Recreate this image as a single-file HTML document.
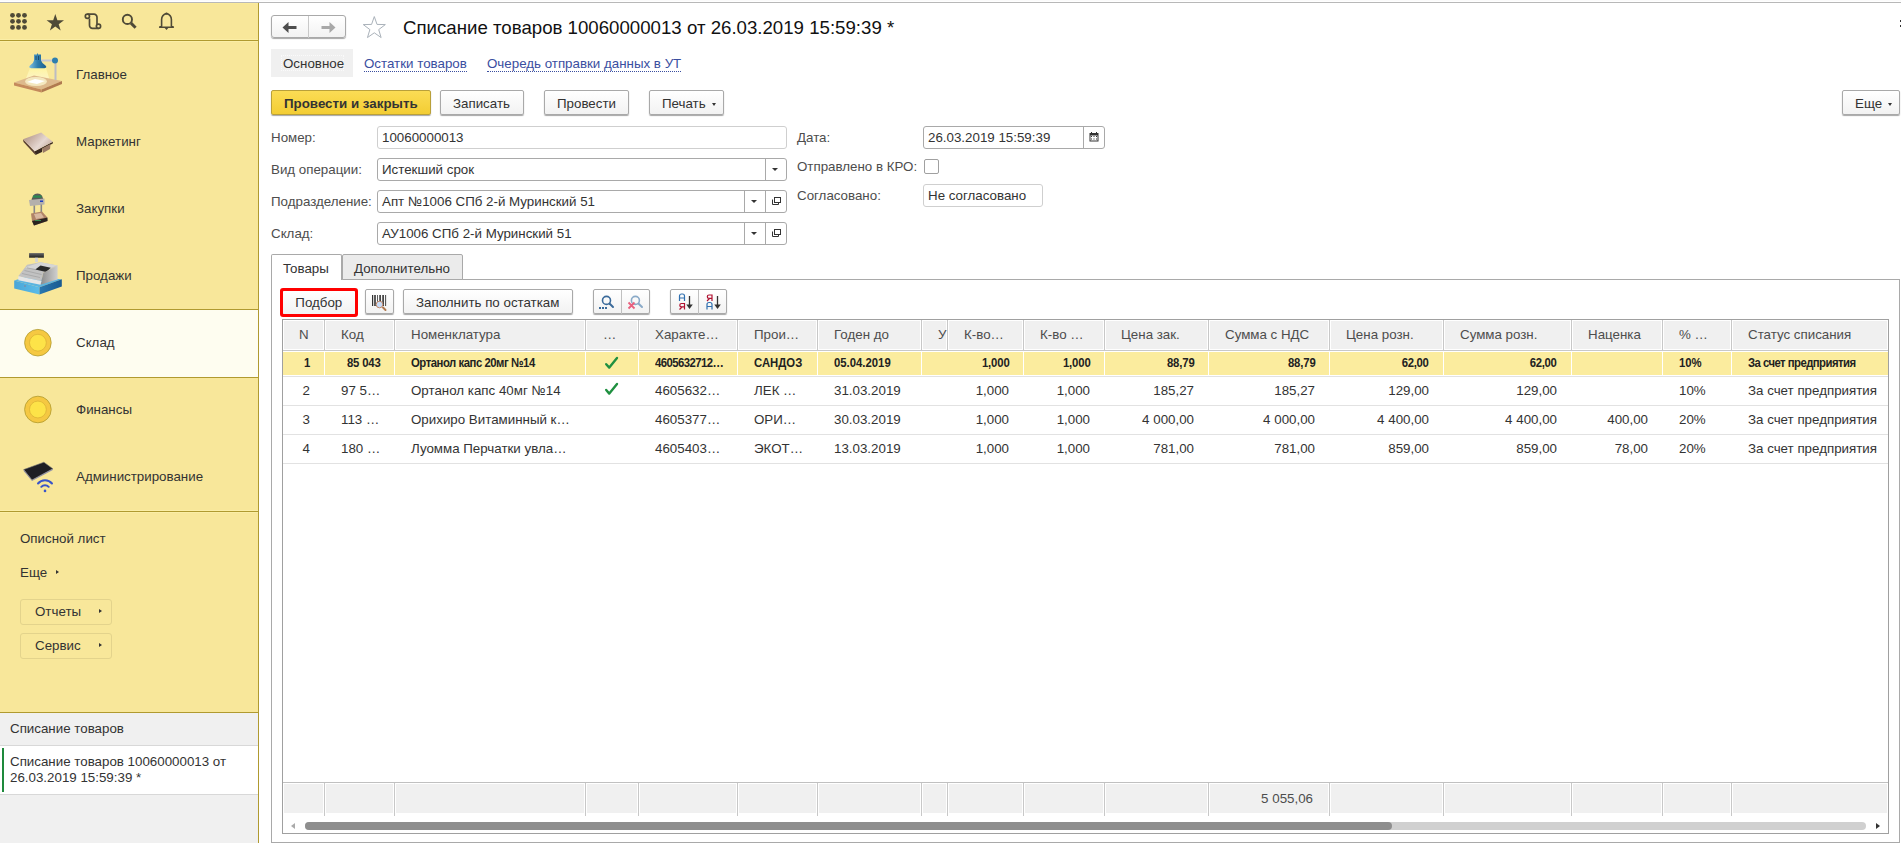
<!DOCTYPE html>
<html><head><meta charset="utf-8">
<style>
*{box-sizing:border-box;margin:0;padding:0}
html,body{width:1901px;height:843px;overflow:hidden;background:#fff}
body{font-family:"Liberation Sans",sans-serif;font-size:13.33px;color:#333;position:relative}
.a{position:absolute;white-space:nowrap}
.t{position:absolute;white-space:nowrap;line-height:15px}
/* sidebar */
#sb{position:absolute;left:0;top:3px;width:258px;height:840px;background:#f8e79a}
#sbr{position:absolute;left:258px;top:3px;width:1px;height:840px;background:#b09a30}
.hl{position:absolute;left:0;width:258px;height:1px;background:#b09a30}
.sec{position:absolute;left:76px;font-size:13.33px;color:#333}
/* buttons */
.btn{position:absolute;border:1px solid #a9a9a9;border-radius:2px;background:linear-gradient(#fff,#f2f2f2);box-shadow:0 1px 1px rgba(0,0,0,.35)}
.inp{position:absolute;border:1px solid #a9a9a9;border-radius:3px;background:#fff}
.lbl{position:absolute;white-space:nowrap;color:#4d4d4d}
.dd{position:absolute;width:0;height:0;border-left:4px solid transparent;border-right:4px solid transparent;border-top:4px solid #333}
.link{position:absolute;white-space:nowrap;color:#3a4ea0;border-bottom:1px dotted #3a4ea0}
/* grid */
.hc{position:absolute;top:320px;height:30px;background:#f0f0f0;border:1px solid #fff}
.vs{position:absolute;width:1px;background:#c8c8c8}
.rs{position:absolute;left:283px;width:1605px;height:1px;background:#e2e2e2}
.c{position:absolute;white-space:nowrap}
.b{font-weight:bold;transform:scaleX(.81);transform-origin:0 0;color:#222}
.br{font-weight:bold;transform:scaleX(.81);transform-origin:100% 0;color:#222}
</style></head><body>

<!-- top gray line -->
<div class="a" style="left:0;top:0;width:1901px;height:1px;background:#fbfbfb"></div>
<div class="a" style="left:0;top:2px;width:1901px;height:1px;background:#b8b8b8"></div>

<!-- SIDEBAR -->
<div id="sb"></div>
<div id="sbr"></div>
<div class="a" style="left:0;top:3px;width:258px;height:1px;background:#fbeb9a"></div>
<!-- toolbar line -->
<div class="a" style="left:0;top:39px;width:258px;height:1px;background:#fbeea6"></div><div class="hl" style="top:40px"></div><div class="a" style="left:0;top:41px;width:258px;height:1px;background:#fbeea6"></div>

<!-- toolbar icons -->
<svg class="a" style="left:0;top:0" width="258" height="40">
  <g fill="#4f4a37">
    <circle cx="12.5" cy="15.3" r="2.4"/><circle cx="18.5" cy="15.3" r="2.4"/><circle cx="24.5" cy="15.3" r="2.4"/>
    <circle cx="12.5" cy="21.3" r="2.4"/><circle cx="18.5" cy="21.3" r="2.4"/><circle cx="24.5" cy="21.3" r="2.4"/>
    <circle cx="12.5" cy="27.4" r="2.4"/><circle cx="18.5" cy="27.4" r="2.4"/><circle cx="24.5" cy="27.4" r="2.4"/>
    <path d="M55.3 14 L57.4 20.3 L64 20.3 L58.7 24.2 L60.7 30.5 L55.3 26.6 L49.9 30.5 L51.9 24.2 L46.6 20.3 L53.2 20.3 Z"/>
  </g>
  <g fill="none" stroke="#4f4a37" stroke-width="1.7">
    <circle cx="87.4" cy="16.3" r="2.1"/><circle cx="98.5" cy="26.3" r="2.1"/><path d="M87.4 14.2 H94 A3 3 0 0 1 97 17.2 V24.2 M89.5 18.4 V25 A3 3 0 0 0 92.5 28.3 H98.5"/>
    <circle cx="127.4" cy="19.4" r="4.6" stroke-width="1.9"/>
    <path d="M131 23.1 L135.6 27.7" stroke-width="2.9"/>
    <path d="M161.6 26 V19.5 Q161.6 15 166.5 13.2 Q171.4 15 171.4 19.5 V26 Q173.3 26.4 173.3 27.3 H159.7 Q159.7 26.4 161.6 26 Z" stroke-width="1.6" stroke-linejoin="round"/>
  </g>
  <path d="M166.5 13 l1.6 1.8 h-3.2z M166.5 30 l1.8 -2 h-3.6z" fill="#4f4a37"/>
</svg>

<!-- section icons & labels -->
<svg class="a" style="left:0;top:41px" width="258" height="470">
  <!-- Главное lamp -->
  <defs>
    <linearGradient id="light" x1="0" y1="0" x2="0" y2="1"><stop offset="0" stop-color="#fff6a0" stop-opacity=".9"/><stop offset="1" stop-color="#fffbe0" stop-opacity=".6"/></linearGradient>
    <linearGradient id="shade" x1="0" y1="0" x2="1" y2="0"><stop offset="0" stop-color="#7fc0e0"/><stop offset=".5" stop-color="#2f7fae"/><stop offset="1" stop-color="#1e5f8e"/></linearGradient>
    <linearGradient id="reg" x1="0" y1="0" x2="1" y2="1"><stop offset="0" stop-color="#d8d8d8"/><stop offset="1" stop-color="#8a8a8a"/></linearGradient>
  </defs>
  <polygon points="30,27 46,27 50,40 25,40" fill="url(#light)"/>
  <polygon points="14,41.5 34,34.5 62,40 41.5,48.5" fill="#ddb98c"/>
  <polygon points="14,41.5 41.5,48.5 41.5,51.5 14,44.5" fill="#c48a5c"/>
  <polygon points="41.5,48.5 62,40 62,43 41.5,51.5" fill="#b07a50"/>
  <ellipse cx="36" cy="40.5" rx="11" ry="4.5" fill="#f8f0c8" opacity=".85"/><polygon points="27,41 35,38 45,40 37,43" fill="#ffffff"/>
  <rect x="54.5" y="19" width="2" height="20" fill="#bcbcc4"/>
  <rect x="41" y="18.5" width="13" height="2" fill="#c8c8d0"/>
  <circle cx="55" cy="19.5" r="3" fill="#2f7fae"/>
  <path d="M34 13.5 H41 V19.5 Q42 22.5 45.5 24.5 Q47.5 26.5 44.5 27.3 H31 Q28 26.5 30 24.5 Q33.5 22.5 34 19.5 Z" fill="url(#shade)"/><rect x="35.5" y="15" width="1" height="4" fill="#1a4a70"/><rect x="38" y="15" width="1" height="4" fill="#1a4a70"/>
  <rect x="37" y="12.5" width="1" height="2" fill="#2f7fae"/>
  <!-- Маркетинг -->
  <defs><linearGradient id="mkg" x1="0" y1="0" x2="1" y2="0.6"><stop offset="0" stop-color="#a88878"/><stop offset=".7" stop-color="#e6d8d2"/><stop offset="1" stop-color="#c8b0a4"/></linearGradient></defs>
  <polygon points="34.7,110.2 52.8,100.7 52.8,102.5 42,108 42,111 35.5,114" fill="#3a2a20"/>
  <polygon points="23,98.3 34.7,110.2 35.5,114 23.5,101" fill="#5a4032"/>
  <polygon points="42,107.5 50.5,103 50,108 43,112" fill="#9a7a66"/>
  <polygon points="23,98.3 41.2,91.5 52.8,100.7 34.7,110.2" fill="url(#mkg)"/>
  <!-- Закупки scale -->
  <path d="M31.5 161.5 q0 -9 6 -9 q6 0 6 9 z" fill="#5a5a5a"/>
  <rect x="33" y="154.5" width="8.5" height="2.2" fill="#2c8a50"/>
  <polygon points="29,159 44.5,157.5 44.5,163.5 30,165" fill="#b4b0ac"/>
  <rect x="40" y="159.5" width="3" height="1.5" fill="#2040c0"/>
  <rect x="33.5" y="164.5" width="1.6" height="8" fill="#888"/>
  <rect x="40.5" y="163.5" width="1.6" height="8" fill="#888"/>
  <polygon points="31,172.5 42,170.5 47,176 47.5,180 34,184.5 32,180" fill="#b08468"/>
  <polygon points="34,173 41,172 44,176.5 36,178" fill="#d8b8a0"/>
  <polygon points="32,180 47.5,176.5 47.5,180 34,184.5" fill="#2a2420"/>
  <rect x="35" y="179" width="6" height="1" fill="#3a8a50"/>
  <!-- Продажи cash register -->
  <defs>
   <linearGradient id="drf" x1="0" y1="0" x2="1" y2="0"><stop offset="0" stop-color="#4aa6d8"/><stop offset="1" stop-color="#5cbce8"/></linearGradient>
   <linearGradient id="drr" x1="0" y1="0" x2="1" y2="0"><stop offset="0" stop-color="#2a78b0"/><stop offset="1" stop-color="#1a5a90"/></linearGradient>
   <linearGradient id="rf" x1="0" y1="0" x2="1" y2="0"><stop offset="0" stop-color="#8c8c8c"/><stop offset="1" stop-color="#cfcfcf"/></linearGradient>
   <linearGradient id="dsp" x1="0" y1="0" x2="0" y2="1"><stop offset="0" stop-color="#666"/><stop offset="1" stop-color="#222"/></linearGradient>
  </defs>
  <rect x="29.1" y="212.1" width="14.8" height="4.6" fill="url(#dsp)"/>
  <rect x="35.1" y="216.7" width="2.8" height="4.5" fill="#d4d4d4"/>
  <polygon points="14.2,239.5 27,235.5 61.8,238.3 39.5,246.2" fill="#5ab4e0"/>
  <polygon points="14.2,239.5 39.5,246.2 39.5,253.5 14.2,247.5" fill="url(#drf)"/>
  <polygon points="39.5,246.2 61.8,238.3 61.8,245.5 39.5,253.5" fill="url(#drr)"/>
  <polygon points="18.3,235.2 27,223.8 40.5,221.2 57.6,224.39999999999998 43.3,231.8 41.5,240" fill="#c2c2c2"/>
  <polygon points="25,226.5 40.5,221.2 57.6,224.39999999999998 45,229" fill="#d6d6d6"/>
  <polygon points="35.3,228.39999999999998 40.5,224.39999999999998 50.7,226.7 46.2,230.89999999999998" fill="#2a2a2a"/>
  <g stroke="#9a9a9a" stroke-width=".6">
   <path d="M22 232.5 L40 236.5 M24.5 229.5 L41.5 233.5 M27 226.8 L36 228.8"/>
  </g>
  <polygon points="43.3,231.8 57.6,224.39999999999998 57.6,238.60000000000002 40.5,243.7 41.5,240" fill="url(#rf)"/>
  <polygon points="18.3,235.2 41.5,240 40.5,243.7 18.3,239.2" fill="#e6e6e6"/>
  <rect x="24.5" y="244.5" width="1" height="1" fill="#c05050"/>
  <!-- Склад circle (y offset 41) -->
  <circle cx="37.9" cy="301.7" r="13.3" fill="#f5c842" stroke="#b09a30" stroke-width=".8"/>
  <circle cx="37.9" cy="301.7" r="8.4" fill="#fde348" stroke="#d4a830" stroke-width=".6"/>
  <!-- Финансы circle -->
  <circle cx="37.9" cy="368.5" r="13.3" fill="#f5c842" stroke="#b09a30" stroke-width=".8"/>
  <circle cx="37.9" cy="368.5" r="8.4" fill="#fde348" stroke="#d4a830" stroke-width=".6"/>
  <!-- Администрирование router -->
  <polygon points="23.7,428.6 43.9,421.2 52.8,427.7 32,438.9" fill="#1e1e24" stroke="#777" stroke-width=".6"/>
  <polygon points="23.7,428.6 32,438.9 32,440 23.7,430" fill="#8888a0"/>
  <polygon points="32,438.9 52.8,427.7 52.8,429 32,440" fill="#9090a8"/>
  <g fill="none" stroke="#3a55c8" stroke-width="2" stroke-linecap="round">
    <path d="M38 442.5 a9 9 0 0 1 14 0"/>
    <path d="M41.3 445.8 a5 5 0 0 1 7.4 0"/>
  </g>
  <circle cx="45" cy="449.9" r="1.3" fill="#3a55c8"/>
</svg>

<!-- selected section bg -->
<div class="a" style="left:0;top:309px;width:258px;height:1px;background:#b09a30"></div>
<div class="a" style="left:0;top:310px;width:258px;height:67px;background:#fefdf0"></div>
<div class="a" style="left:0;top:377px;width:258px;height:1px;background:#b09a30"></div>
<svg class="a" style="left:0;top:310px" width="80" height="67">
  <circle cx="37.9" cy="32.7" r="13.3" fill="#f5c842" stroke="#b09a30" stroke-width=".8"/>
  <circle cx="37.9" cy="32.7" r="8.4" fill="#fde348" stroke="#d4a830" stroke-width=".6"/>
</svg>

<div class="t sec" style="top:67px">Главное</div>
<div class="t sec" style="top:134px">Маркетинг</div>
<div class="t sec" style="top:201px">Закупки</div>
<div class="t sec" style="top:268px">Продажи</div>
<div class="t sec" style="top:335px">Склад</div>
<div class="t sec" style="top:402px">Финансы</div>
<div class="t sec" style="top:469px">Администрирование</div>

<div class="a" style="left:0;top:510px;width:258px;height:1px;background:#fbeea6"></div><div class="hl" style="top:511px"></div><div class="a" style="left:0;top:512px;width:258px;height:1px;background:#fbeea6"></div>

<div class="t" style="left:20px;top:531px">Описной лист</div>
<div class="t" style="left:20px;top:565px">Еще</div>
<div class="a" style="left:56px;top:570px;width:0;height:0;border-top:2.5px solid transparent;border-bottom:2.5px solid transparent;border-left:3px solid #333"></div>
<div class="a" style="left:20px;top:599px;width:92px;height:26px;border:1px solid #e3d38c;border-radius:3px"></div>
<div class="t" style="left:35px;top:604px">Отчеты</div>
<div class="a" style="left:99px;top:609px;width:0;height:0;border-top:2.5px solid transparent;border-bottom:2.5px solid transparent;border-left:3px solid #333"></div>
<div class="a" style="left:20px;top:633px;width:92px;height:26px;border:1px solid #e3d38c;border-radius:3px"></div>
<div class="t" style="left:35px;top:638px">Сервис</div>
<div class="a" style="left:99px;top:643px;width:0;height:0;border-top:2.5px solid transparent;border-bottom:2.5px solid transparent;border-left:3px solid #333"></div>

<!-- open windows panel -->
<div class="a" style="left:0;top:712px;width:258px;height:1px;background:#b09a30"></div>
<div class="a" style="left:0;top:713px;width:258px;height:130px;background:#f0f0f0"></div>
<div class="a" style="left:0;top:745px;width:258px;height:1px;background:#d8d8d8"></div>
<div class="a" style="left:0;top:746px;width:258px;height:48px;background:#fff"></div>
<div class="a" style="left:0;top:794px;width:258px;height:1px;background:#d8d8d8"></div>
<div class="a" style="left:2px;top:748px;width:2px;height:44px;background:#1e8a3c"></div>
<div class="t" style="left:10px;top:721px">Списание товаров</div>
<div class="t" style="left:10px;top:754px;line-height:16px">Списание товаров 10060000013 от<br>26.03.2019 15:59:39 *</div>


<!-- MAIN FORM -->
<!-- nav buttons -->
<div class="btn" style="left:271px;top:15px;width:75px;height:23px;border-radius:3px"></div>
<div class="a" style="left:308px;top:16px;width:1px;height:22px;background:#c8c8c8"></div>
<svg class="a" style="left:271px;top:15px" width="80" height="24">
  <path d="M11.5 12.5 L17.5 7 V11 H25.5 V14 H17.5 V18 Z" fill="#4d4d4d"/>
  <path d="M64.5 12.5 L58.5 7 V11 H50.5 V14 H58.5 V18 Z" fill="#a8a8a8"/>
</svg>
<svg class="a" style="left:360px;top:14px" width="30" height="26">
  <polygon points="14.30,2.57 17.03,10.42 25.33,10.59 18.71,15.60 21.12,23.55 14.30,18.81 7.48,23.55 9.89,15.60 3.27,10.59 11.57,10.42" fill="none" stroke="#aab2ba" stroke-width="1" stroke-linejoin="miter"/>
</svg>
<div class="a" style="left:403px;top:16.8px;font-size:18.67px;line-height:22px;color:#111">Списание товаров 10060000013 от 26.03.2019 15:59:39 *</div>
<!-- close x partial -->
<div class="a" style="left:1900px;top:20px;width:1px;height:2px;background:#333"></div>
<div class="a" style="left:1900px;top:25px;width:1px;height:2px;background:#333"></div>

<!-- sub tabs -->
<div class="a" style="left:271px;top:49px;width:82px;height:28px;background:#f0f0f0"></div>
<div class="a" style="left:281px;top:55px;width:63px;height:16px;border:1px dotted #fafafa"></div>
<div class="t" style="left:283px;top:56px;color:#333">Основное</div>
<div class="link" style="left:364px;top:56px;line-height:15px">Остатки товаров</div>
<div class="link" style="left:487px;top:56px;line-height:15px">Очередь отправки данных в УТ</div>

<!-- command bar -->
<div class="a" style="left:271px;top:90px;width:160px;height:25px;border:1px solid #b9a03a;border-radius:2px;background:linear-gradient(#fbdc55,#f3cd33);box-shadow:0 1px 1px rgba(0,0,0,.35)"></div>
<div class="t" style="left:284px;top:96px;font-weight:bold;color:#333">Провести и закрыть</div>
<div class="btn" style="left:440px;top:90px;width:84px;height:25px"></div>
<div class="t" style="left:453px;top:96px">Записать</div>
<div class="btn" style="left:544px;top:90px;width:85px;height:25px"></div>
<div class="t" style="left:557px;top:96px">Провести</div>
<div class="btn" style="left:649px;top:90px;width:75px;height:25px"></div>
<div class="t" style="left:662px;top:96px">Печать</div>
<div class="dd" style="left:711.5px;top:103px;border-left-width:2.5px;border-right-width:2.5px;border-top-width:3px"></div>
<div class="btn" style="left:1842px;top:90px;width:58px;height:25px"></div>
<div class="t" style="left:1855px;top:96px">Еще</div>
<div class="dd" style="left:1887.5px;top:103px;border-left-width:2.5px;border-right-width:2.5px;border-top-width:3px"></div>

<!-- fields -->
<div class="t lbl" style="left:271px;top:130px">Номер:</div>
<div class="inp" style="left:377px;top:126px;width:410px;height:23px;border-color:#cfcfcf"></div>
<div class="t" style="left:382px;top:130px">10060000013</div>

<div class="t lbl" style="left:271px;top:162px">Вид операции:</div>
<div class="inp" style="left:377px;top:158px;width:410px;height:23px"></div>
<div class="a" style="left:765px;top:159px;width:1px;height:21px;background:#a9a9a9"></div>
<div class="t" style="left:382px;top:162px">Истекший срок</div>
<div class="dd" style="left:772px;top:168px;border-left-width:3.5px;border-right-width:3.5px;border-top-width:3.5px"></div>

<div class="t lbl" style="left:271px;top:194px">Подразделение:</div>
<div class="inp" style="left:377px;top:190px;width:410px;height:23px"></div>
<div class="a" style="left:744px;top:191px;width:1px;height:21px;background:#a9a9a9"></div>
<div class="a" style="left:765px;top:191px;width:1px;height:21px;background:#a9a9a9"></div>
<div class="t" style="left:382px;top:194px">Апт №1006 СПб 2-й Муринский 51</div>
<div class="dd" style="left:751px;top:200px;border-left-width:3.5px;border-right-width:3.5px;border-top-width:3.5px"></div>

<div class="t lbl" style="left:271px;top:226px">Склад:</div>
<div class="inp" style="left:377px;top:222px;width:410px;height:23px"></div>
<div class="a" style="left:744px;top:223px;width:1px;height:21px;background:#a9a9a9"></div>
<div class="a" style="left:765px;top:223px;width:1px;height:21px;background:#a9a9a9"></div>
<div class="t" style="left:382px;top:226px">АУ1006 СПб 2-й Муринский 51</div>
<div class="dd" style="left:751px;top:232px;border-left-width:3.5px;border-right-width:3.5px;border-top-width:3.5px"></div>
<svg class="a" style="left:766px;top:190px" width="21" height="56">
  <g fill="none" stroke="#333" stroke-width="1">
    <rect x="8.5" y="7.5" width="6" height="5"/>
    <path d="M6.5 9.5 v5 h6 v-2"/>
    <rect x="8.5" y="39.5" width="6" height="5"/>
    <path d="M6.5 41.5 v5 h6 v-2"/>
  </g>
</svg>

<div class="t lbl" style="left:797px;top:130px">Дата:</div>
<div class="inp" style="left:923px;top:126px;width:182px;height:23px"></div>
<div class="a" style="left:1083px;top:127px;width:1px;height:21px;background:#a9a9a9"></div>
<div class="t" style="left:928px;top:130px">26.03.2019 15:59:39</div>
<svg class="a" style="left:1084px;top:127px" width="21" height="21">
  <rect x="5.5" y="6" width="9" height="8.5" fill="#333"/>
  <rect x="6.5" y="8.5" width="7" height="5" fill="#fff"/>
  <g fill="#333"><rect x="7" y="9" width="1" height="1"/><rect x="9.5" y="9" width="1" height="1"/><rect x="12" y="9" width="1" height="1"/><rect x="7" y="11.5" width="1" height="1"/><rect x="9.5" y="11.5" width="1" height="1"/><rect x="12" y="11.5" width="1" height="1"/></g>
  <rect x="7" y="5" width="1" height="2" fill="#333"/><rect x="12" y="5" width="1" height="2" fill="#333"/>
</svg>

<div class="t lbl" style="left:797px;top:159px">Отправлено в КРО:</div>
<div class="a" style="left:924px;top:159px;width:15px;height:15px;border:1px solid #a0a0a0;border-radius:2px;background:#fff"></div>

<div class="t lbl" style="left:797px;top:188px">Согласовано:</div>
<div class="inp" style="left:923px;top:184px;width:120px;height:23px;border-color:#cfcfcf"></div>
<div class="t" style="left:928px;top:188px">Не согласовано</div>

<!-- tabs -->
<div class="a" style="left:271px;top:279px;width:1629px;height:564px;border:1px solid #a9a9a9;border-bottom-color:#a9a9a9"></div>
<div class="a" style="left:271px;top:254px;width:71px;height:26px;border:1px solid #a9a9a9;border-bottom:none;border-radius:2px 2px 0 0;background:#fff"></div>
<div class="a" style="left:342px;top:254px;width:121px;height:26px;border:1px solid #a9a9a9;border-radius:2px 2px 0 0;background:#ebebeb"></div>
<div class="t" style="left:283px;top:261px">Товары</div>
<div class="t" style="left:354px;top:261px">Дополнительно</div>

<!-- table toolbar -->
<div class="btn" style="left:282px;top:290px;width:74px;height:25px"></div>
<div class="a" style="left:280px;top:288px;width:78px;height:29px;border:3px solid #f00;border-radius:3px"></div>
<div class="t" style="left:295.3px;top:295px">Подбор</div>
<div class="btn" style="left:365px;top:289px;width:29px;height:25px"></div>
<svg class="a" style="left:365px;top:289px" width="29" height="26">
  <g fill="#333">
    <rect x="7" y="6" width="1.2" height="11"/><rect x="9.2" y="6" width="1.6" height="11"/><rect x="12.2" y="6" width="0.8" height="11"/>
    <rect x="14.3" y="6" width="1.6" height="11"/><rect x="17.3" y="6" width="1.6" height="11"/><rect x="20.2" y="6" width="0.9" height="11"/>
  </g>
  <path d="M18 18.5 L20.5 21" stroke="#b07a50" stroke-width="2" stroke-linecap="round"/>
  <circle cx="14.5" cy="15.5" r="3.3" fill="#c8dcf8" stroke="#c08868" stroke-width="1"/>
</svg>
<div class="btn" style="left:403px;top:289px;width:170px;height:25px"></div>
<div class="t" style="left:416px;top:295px">Заполнить по остаткам</div>

<div class="btn" style="left:593px;top:289px;width:57px;height:25px"></div>
<div class="a" style="left:621px;top:290px;width:1px;height:24px;background:#c0c0c0"></div>
<svg class="a" style="left:593px;top:289px" width="57" height="26">
  <circle cx="13.5" cy="11.4" r="4" fill="none" stroke="#3a6a9a" stroke-width="1.6"/>
  <path d="M16.5 14.5 L20 18" stroke="#3a6a9a" stroke-width="2" stroke-linecap="round"/>
  <g fill="#3a6a9a"><rect x="6" y="18" width="2" height="2"/><rect x="9" y="18" width="2" height="2"/><rect x="12" y="18" width="2" height="2"/></g>
  <circle cx="42.4" cy="11.4" r="4" fill="none" stroke="#8aaac8" stroke-width="1.6"/>
  <path d="M45.4 14.5 L49 18" stroke="#8aaac8" stroke-width="2" stroke-linecap="round"/>
  <path d="M35.5 13.5 L41.5 19.5 M41.5 13.5 L35.5 19.5" stroke="#e8607e" stroke-width="1.8"/>
</svg>

<div class="btn" style="left:670px;top:289px;width:57px;height:25px"></div>
<div class="a" style="left:698px;top:290px;width:1px;height:24px;background:#c0c0c0"></div>
<svg class="a" style="left:670px;top:289px" width="57" height="26">
  <g fill="none" stroke-width="1.2">
    <path d="M9.5 12 V7 a2 2 0 0 1 2 -2 h1 a2 2 0 0 1 2 2 V12 M9.5 9 H14.5" stroke="#3070b0"/>
    <path d="M14.5 20.5 V14.5 H11.5 a1.7 1.7 0 0 0 0 3.4 H14.5 M12 18 L9.5 20.5" stroke="#b01030"/>
    <path d="M42 12 V6 H39 a1.7 1.7 0 0 0 0 3.4 H42 M39.5 9.5 L37 12" stroke="#b01030"/>
    <path d="M37 20.5 V15.5 a2 2 0 0 1 2 -2 h1 a2 2 0 0 1 2 2 V20.5 M37 17.5 H42" stroke="#3070b0"/>
  </g>
  <path d="M19.5 7 V18" stroke="#333" stroke-width="1.3"/>
  <path d="M16.3 15.5 L19.5 20 L22.8 15.5 Z" fill="#333"/>
  <path d="M47.5 7 V18" stroke="#333" stroke-width="1.3"/>
  <path d="M44.3 15.5 L47.5 20 L50.8 15.5 Z" fill="#333"/>
</svg>

<!-- TABLE -->
<div class="a" style="left:282px;top:319px;width:1607px;height:515px;border:1px solid #a0a0a0;background:#fff"></div>
<div class="hc" style="left:283px;width:41px"></div>
<div class="hc" style="left:325px;width:69px"></div>
<div class="hc" style="left:395px;width:190px"></div>
<div class="hc" style="left:586px;width:52px"></div>
<div class="hc" style="left:639px;width:98px"></div>
<div class="hc" style="left:738px;width:79px"></div>
<div class="hc" style="left:818px;width:103px"></div>
<div class="hc" style="left:922px;width:25px"></div>
<div class="hc" style="left:948px;width:75px"></div>
<div class="hc" style="left:1024px;width:80px"></div>
<div class="hc" style="left:1105px;width:103px"></div>
<div class="hc" style="left:1209px;width:120px"></div>
<div class="hc" style="left:1330px;width:113px"></div>
<div class="hc" style="left:1444px;width:127px"></div>
<div class="hc" style="left:1572px;width:90px"></div>
<div class="hc" style="left:1663px;width:68px"></div>
<div class="hc" style="left:1732px;width:156px"></div>
<div class="vs" style="left:324px;top:320px;height:30px"></div>
<div class="vs" style="left:394px;top:320px;height:30px"></div>
<div class="vs" style="left:585px;top:320px;height:30px"></div>
<div class="vs" style="left:638px;top:320px;height:30px"></div>
<div class="vs" style="left:737px;top:320px;height:30px"></div>
<div class="vs" style="left:817px;top:320px;height:30px"></div>
<div class="vs" style="left:921px;top:320px;height:30px"></div>
<div class="vs" style="left:947px;top:320px;height:30px"></div>
<div class="vs" style="left:1023px;top:320px;height:30px"></div>
<div class="vs" style="left:1104px;top:320px;height:30px"></div>
<div class="vs" style="left:1208px;top:320px;height:30px"></div>
<div class="vs" style="left:1329px;top:320px;height:30px"></div>
<div class="vs" style="left:1443px;top:320px;height:30px"></div>
<div class="vs" style="left:1571px;top:320px;height:30px"></div>
<div class="vs" style="left:1662px;top:320px;height:30px"></div>
<div class="vs" style="left:1731px;top:320px;height:30px"></div>
<div class="a" style="left:283px;top:350px;width:1605px;height:1px;background:#c8c8c8"></div>
<div class="c" style="left:299px;top:327px;line-height:15px;color:#4d4d4d;">N</div>
<div class="c" style="left:341px;top:327px;line-height:15px;color:#4d4d4d;">Код</div>
<div class="c" style="left:411px;top:327px;line-height:15px;color:#4d4d4d;">Номенклатура</div>
<div class="c" style="left:603px;top:327px;line-height:15px;color:#4d4d4d;">…</div>
<div class="c" style="left:655px;top:327px;line-height:15px;color:#4d4d4d;">Характе…</div>
<div class="c" style="left:754px;top:327px;line-height:15px;color:#4d4d4d;">Прои…</div>
<div class="c" style="left:834px;top:327px;line-height:15px;color:#4d4d4d;">Годен до</div>
<div class="c" style="left:938px;top:327px;line-height:15px;color:#4d4d4d;width:9px;overflow:hidden;">У</div>
<div class="c" style="left:964px;top:327px;line-height:15px;color:#4d4d4d;">К-во…</div>
<div class="c" style="left:1040px;top:327px;line-height:15px;color:#4d4d4d;">К-во …</div>
<div class="c" style="left:1121px;top:327px;line-height:15px;color:#4d4d4d;">Цена зак.</div>
<div class="c" style="left:1225px;top:327px;line-height:15px;color:#4d4d4d;">Сумма с НДС</div>
<div class="c" style="left:1346px;top:327px;line-height:15px;color:#4d4d4d;">Цена розн.</div>
<div class="c" style="left:1460px;top:327px;line-height:15px;color:#4d4d4d;">Сумма розн.</div>
<div class="c" style="left:1588px;top:327px;line-height:15px;color:#4d4d4d;">Наценка</div>
<div class="c" style="left:1679px;top:327px;line-height:15px;color:#4d4d4d;">% …</div>
<div class="c" style="left:1748px;top:327px;line-height:15px;color:#4d4d4d;">Статус списания</div>
<div class="a" style="left:283px;top:352px;width:41px;height:23px;background:#fbec9e"></div>
<div class="a" style="left:325px;top:352px;width:69px;height:23px;background:#fbec9e"></div>
<div class="a" style="left:395px;top:352px;width:190px;height:23px;background:#fbec9e"></div>
<div class="a" style="left:586px;top:352px;width:52px;height:23px;background:#fbec9e"></div>
<div class="a" style="left:639px;top:352px;width:98px;height:23px;background:#fbec9e"></div>
<div class="a" style="left:738px;top:352px;width:79px;height:23px;background:#fbec9e"></div>
<div class="a" style="left:818px;top:352px;width:103px;height:23px;background:#fbec9e"></div>
<div class="a" style="left:922px;top:352px;width:101px;height:23px;background:#fbec9e"></div>
<div class="a" style="left:1024px;top:352px;width:80px;height:23px;background:#fbec9e"></div>
<div class="a" style="left:1105px;top:352px;width:103px;height:23px;background:#fbec9e"></div>
<div class="a" style="left:1209px;top:352px;width:120px;height:23px;background:#fbec9e"></div>
<div class="a" style="left:1330px;top:352px;width:113px;height:23px;background:#fbec9e"></div>
<div class="a" style="left:1444px;top:352px;width:127px;height:23px;background:#fbec9e"></div>
<div class="a" style="left:1572px;top:352px;width:90px;height:23px;background:#fbec9e"></div>
<div class="a" style="left:1663px;top:352px;width:68px;height:23px;background:#fbec9e"></div>
<div class="a" style="left:1732px;top:352px;width:156px;height:23px;background:#fbec9e"></div>
<div class="rs" style="top:376px"></div>
<div class="rs" style="top:405px"></div>
<div class="rs" style="top:434px"></div>
<div class="rs" style="top:463px"></div>
<div class="c" style="right:1591.0px;top:355px;line-height:15px;text-align:right;font-weight:bold;color:#222;letter-spacing:0px;transform:scaleX(0.85);transform-origin:100% 0">1</div>
<div class="c" style="right:1520.17px;top:355px;line-height:15px;text-align:right;font-weight:bold;color:#222;letter-spacing:-0.2px;transform:scaleX(0.85);transform-origin:100% 0">85 043</div>
<div class="c" style="left:410.5px;top:355px;line-height:15px;font-weight:bold;color:#222;letter-spacing:-0.55px;transform:scaleX(0.85);transform-origin:0 0">Ортанол капс 20мг №14</div>
<div class="c" style="left:654.5px;top:355px;line-height:15px;font-weight:bold;color:#222;letter-spacing:-0.64px;transform:scaleX(0.85);transform-origin:0 0">4605632712…</div>
<div class="c" style="left:753.5px;top:355px;line-height:15px;font-weight:bold;color:#222;letter-spacing:0px;transform:scaleX(0.85);transform-origin:0 0">САНДОЗ</div>
<div class="c" style="left:833.5px;top:355px;line-height:15px;font-weight:bold;color:#222;letter-spacing:0px;transform:scaleX(0.85);transform-origin:0 0">05.04.2019</div>
<div class="c" style="right:891.6275px;top:355px;line-height:15px;text-align:right;font-weight:bold;color:#222;letter-spacing:-0.15px;transform:scaleX(0.85);transform-origin:100% 0">1,000</div>
<div class="c" style="right:810.6275px;top:355px;line-height:15px;text-align:right;font-weight:bold;color:#222;letter-spacing:-0.15px;transform:scaleX(0.85);transform-origin:100% 0">1,000</div>
<div class="c" style="right:706.6275px;top:355px;line-height:15px;text-align:right;font-weight:bold;color:#222;letter-spacing:-0.15px;transform:scaleX(0.85);transform-origin:100% 0">88,79</div>
<div class="c" style="right:585.6275px;top:355px;line-height:15px;text-align:right;font-weight:bold;color:#222;letter-spacing:-0.15px;transform:scaleX(0.85);transform-origin:100% 0">88,79</div>
<div class="c" style="right:472.31449999999995px;top:355px;line-height:15px;text-align:right;font-weight:bold;color:#222;letter-spacing:-0.37px;transform:scaleX(0.85);transform-origin:100% 0">62,00</div>
<div class="c" style="right:344.31449999999995px;top:355px;line-height:15px;text-align:right;font-weight:bold;color:#222;letter-spacing:-0.37px;transform:scaleX(0.85);transform-origin:100% 0">62,00</div>
<div class="c" style="left:1678.5px;top:355px;line-height:15px;font-weight:bold;color:#222;letter-spacing:0px;transform:scaleX(0.85);transform-origin:0 0">10%</div>
<div class="c" style="left:1747.5px;top:355px;line-height:15px;font-weight:bold;color:#222;letter-spacing:-0.63px;transform:scaleX(0.85);transform-origin:0 0">За счет предприятия</div>
<div class="c" style="right:1591px;top:383px;line-height:15px;text-align:right;">2</div>
<div class="c" style="left:341px;top:383px;line-height:15px;">97 5…</div>
<div class="c" style="left:411px;top:383px;line-height:15px;">Ортанол капс 40мг №14</div>
<div class="c" style="left:655px;top:383px;line-height:15px;">4605632…</div>
<div class="c" style="left:754px;top:383px;line-height:15px;">ЛЕК …</div>
<div class="c" style="left:834px;top:383px;line-height:15px;">31.03.2019</div>
<div class="c" style="right:892px;top:383px;line-height:15px;text-align:right;">1,000</div>
<div class="c" style="right:811px;top:383px;line-height:15px;text-align:right;">1,000</div>
<div class="c" style="right:707px;top:383px;line-height:15px;text-align:right;">185,27</div>
<div class="c" style="right:586px;top:383px;line-height:15px;text-align:right;">185,27</div>
<div class="c" style="right:472px;top:383px;line-height:15px;text-align:right;">129,00</div>
<div class="c" style="right:344px;top:383px;line-height:15px;text-align:right;">129,00</div>
<div class="c" style="left:1679px;top:383px;line-height:15px;">10%</div>
<div class="c" style="left:1748px;top:383px;line-height:15px;">За счет предприятия</div>
<div class="c" style="right:1591px;top:412px;line-height:15px;text-align:right;">3</div>
<div class="c" style="left:341px;top:412px;line-height:15px;">113 …</div>
<div class="c" style="left:411px;top:412px;line-height:15px;">Орихиро Витаминный к…</div>
<div class="c" style="left:655px;top:412px;line-height:15px;">4605377…</div>
<div class="c" style="left:754px;top:412px;line-height:15px;">ОРИ…</div>
<div class="c" style="left:834px;top:412px;line-height:15px;">30.03.2019</div>
<div class="c" style="right:892px;top:412px;line-height:15px;text-align:right;">1,000</div>
<div class="c" style="right:811px;top:412px;line-height:15px;text-align:right;">1,000</div>
<div class="c" style="right:707px;top:412px;line-height:15px;text-align:right;">4 000,00</div>
<div class="c" style="right:586px;top:412px;line-height:15px;text-align:right;">4 000,00</div>
<div class="c" style="right:472px;top:412px;line-height:15px;text-align:right;">4 400,00</div>
<div class="c" style="right:344px;top:412px;line-height:15px;text-align:right;">4 400,00</div>
<div class="c" style="right:253px;top:412px;line-height:15px;text-align:right;">400,00</div>
<div class="c" style="left:1679px;top:412px;line-height:15px;">20%</div>
<div class="c" style="left:1748px;top:412px;line-height:15px;">За счет предприятия</div>
<div class="c" style="right:1591px;top:441px;line-height:15px;text-align:right;">4</div>
<div class="c" style="left:341px;top:441px;line-height:15px;">180 …</div>
<div class="c" style="left:411px;top:441px;line-height:15px;">Луомма Перчатки увла…</div>
<div class="c" style="left:655px;top:441px;line-height:15px;">4605403…</div>
<div class="c" style="left:754px;top:441px;line-height:15px;">ЭКОТ…</div>
<div class="c" style="left:834px;top:441px;line-height:15px;">13.03.2019</div>
<div class="c" style="right:892px;top:441px;line-height:15px;text-align:right;">1,000</div>
<div class="c" style="right:811px;top:441px;line-height:15px;text-align:right;">1,000</div>
<div class="c" style="right:707px;top:441px;line-height:15px;text-align:right;">781,00</div>
<div class="c" style="right:586px;top:441px;line-height:15px;text-align:right;">781,00</div>
<div class="c" style="right:472px;top:441px;line-height:15px;text-align:right;">859,00</div>
<div class="c" style="right:344px;top:441px;line-height:15px;text-align:right;">859,00</div>
<div class="c" style="right:253px;top:441px;line-height:15px;text-align:right;">78,00</div>
<div class="c" style="left:1679px;top:441px;line-height:15px;">20%</div>
<div class="c" style="left:1748px;top:441px;line-height:15px;">За счет предприятия</div>
<svg class="a" style="left:600px;top:352px" width="24" height="48"><g fill="none" stroke="#1f9040" stroke-width="2.4" stroke-linecap="round" stroke-linejoin="round"><path d="M6.2 12.2 L9.3 15.6 L17 6"/><path d="M6.2 38 L9.3 41.6 L17 32"/></g></svg>
<div class="a" style="left:283px;top:782px;width:1605px;height:1px;background:#c0c0c0"></div>
<div class="a" style="left:284px;top:784px;width:39px;height:29px;background:#f0f0f0"></div>
<div class="a" style="left:326px;top:784px;width:67px;height:29px;background:#f0f0f0"></div>
<div class="a" style="left:396px;top:784px;width:188px;height:29px;background:#f0f0f0"></div>
<div class="a" style="left:587px;top:784px;width:50px;height:29px;background:#f0f0f0"></div>
<div class="a" style="left:640px;top:784px;width:96px;height:29px;background:#f0f0f0"></div>
<div class="a" style="left:739px;top:784px;width:77px;height:29px;background:#f0f0f0"></div>
<div class="a" style="left:819px;top:784px;width:101px;height:29px;background:#f0f0f0"></div>
<div class="a" style="left:923px;top:784px;width:23px;height:29px;background:#f0f0f0"></div>
<div class="a" style="left:949px;top:784px;width:73px;height:29px;background:#f0f0f0"></div>
<div class="a" style="left:1025px;top:784px;width:78px;height:29px;background:#f0f0f0"></div>
<div class="a" style="left:1106px;top:784px;width:101px;height:29px;background:#f0f0f0"></div>
<div class="a" style="left:1210px;top:784px;width:118px;height:29px;background:#f0f0f0"></div>
<div class="a" style="left:1331px;top:784px;width:111px;height:29px;background:#f0f0f0"></div>
<div class="a" style="left:1445px;top:784px;width:125px;height:29px;background:#f0f0f0"></div>
<div class="a" style="left:1573px;top:784px;width:88px;height:29px;background:#f0f0f0"></div>
<div class="a" style="left:1664px;top:784px;width:66px;height:29px;background:#f0f0f0"></div>
<div class="a" style="left:1733px;top:784px;width:154px;height:29px;background:#f0f0f0"></div>
<div class="vs" style="left:324px;top:783px;height:33px"></div>
<div class="vs" style="left:394px;top:783px;height:33px"></div>
<div class="vs" style="left:585px;top:783px;height:33px"></div>
<div class="vs" style="left:638px;top:783px;height:33px"></div>
<div class="vs" style="left:737px;top:783px;height:33px"></div>
<div class="vs" style="left:817px;top:783px;height:33px"></div>
<div class="vs" style="left:921px;top:783px;height:33px"></div>
<div class="vs" style="left:947px;top:783px;height:33px"></div>
<div class="vs" style="left:1023px;top:783px;height:33px"></div>
<div class="vs" style="left:1104px;top:783px;height:33px"></div>
<div class="vs" style="left:1208px;top:783px;height:33px"></div>
<div class="vs" style="left:1329px;top:783px;height:33px"></div>
<div class="vs" style="left:1443px;top:783px;height:33px"></div>
<div class="vs" style="left:1571px;top:783px;height:33px"></div>
<div class="vs" style="left:1662px;top:783px;height:33px"></div>
<div class="vs" style="left:1731px;top:783px;height:33px"></div>
<div class="c" style="right:588px;top:791px;line-height:15px;color:#4d4d4d">5 055,06</div>
<div class="a" style="left:305px;top:822px;width:1561px;height:8px;border-radius:4px;background:#d0d0d0"></div>
<div class="a" style="left:305px;top:822px;width:1087px;height:8px;border-radius:4px;background:#8e8e8e"></div>
<div class="a" style="left:291px;top:823px;width:0;height:0;border-top:3px solid transparent;border-bottom:3px solid transparent;border-right:4px solid #aaa"></div>
<div class="a" style="left:1876px;top:823px;width:0;height:0;border-top:3px solid transparent;border-bottom:3px solid transparent;border-left:4px solid #333"></div>
</body></html>
